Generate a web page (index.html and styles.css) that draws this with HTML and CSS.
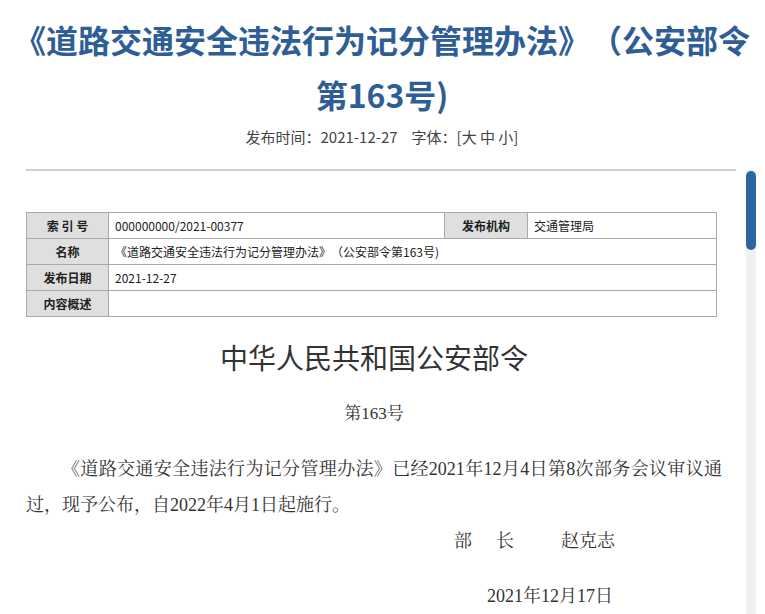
FILE: index.html
```html
<!DOCTYPE html>
<html lang="zh-CN">
<head>
<meta charset="utf-8">
<title>道路交通安全违法行为记分管理办法</title>
<link rel="stylesheet" href="styles.css">
</head>
<body>
<div class="page">
  <header class="head">
    <h1 class="title">《道路交通安全违法行为记分管理办法》（公安部令第163号)</h1>
    <div class="meta">发布时间：2021-12-27<span class="gap"></span>字体：[大 中 小]</div>
  </header>
  <div class="rule"></div>
  <div class="article">
    <table class="info">
      <colgroup>
        <col class="c1"><col class="c2"><col class="c3"><col class="c4">
      </colgroup>
      <tr>
        <th>索 引 号</th>
        <td>000000000/2021-00377</td>
        <th>发布机构</th>
        <td>交通管理局</td>
      </tr>
      <tr>
        <th>名称</th>
        <td colspan="3">《道路交通安全违法行为记分管理办法》（公安部令第163号)</td>
      </tr>
      <tr>
        <th>发布日期</th>
        <td colspan="3">2021-12-27</td>
      </tr>
      <tr>
        <th>内容概述</th>
        <td colspan="3"></td>
      </tr>
    </table>
    <h2 class="order">中华人民共和国公安部令</h2>
    <p class="num">第163号</p>
    <p class="para">《道路交通安全违法行为记分管理办法》已经2021年12月4日第8次部务会议审议通过，现予公布，自2022年4月1日起施行。</p>
    <p class="sign"><span>部</span><span class="s1">长</span><span class="s2">赵克志</span></p>
    <p class="date">2021年12月17日</p>
  </div>
  <div class="scroll-track"><div class="scroll-thumb"></div></div>
</div>
</body>
</html>
```

FILE: styles.css
```css
html, body {
  margin: 0;
  padding: 0;
  background: #ffffff;
}

.page {
  position: relative;
  width: 765px;
  height: 614px;
  overflow: hidden;
  font-family: "Noto Sans CJK SC", sans-serif;
  text-spacing-trim: space-all;
}

.head {
  width: 764px;
  text-align: center;
  padding-top: 12px;
}

.title {
  margin: 0;
  font-size: 32px;
  line-height: 55px;
  font-weight: 700;
  color: #2e5e95;
  font-family: "Noto Sans CJK SC", sans-serif;
}

.meta {
  margin-top: 5px;
  font-size: 15px;
  line-height: 20px;
  color: #444444;
  padding-left: 0;
}

.gap {
  display: inline-block;
  width: 14px;
}

.rule {
  margin: 22px 0 0 26px;
  width: 710px;
  height: 2px;
  background: #d0d0d0;
}

.article {
  width: 696px;
  margin: 41px 0 0 26px;
  color: #333333;
}

.info {
  width: 690px;
  border-collapse: collapse;
  table-layout: fixed;
  font-size: 12px;
}

.info .c1 { width: 82px; }
.info .c2 { width: 336px; }
.info .c3 { width: 83px; }
.info .c4 { width: 189px; }

.info th,
.info td {
  border: 1px solid #a9a9a9;
  height: 25px;
  padding: 0 6px;
  line-height: 25px;
  white-space: nowrap;
  overflow: hidden;
}

.info th {
  background: #dfdfdf;
  font-weight: 700;
  text-align: center;
  color: #222222;
}

.info td {
  text-align: left;
  color: #222222;
  font-family: "Noto Sans CJK SC", sans-serif;
}

.order {
  margin: 20px 0 0 0;
  text-align: center;
  font-size: 28px;
  line-height: 40px;
  font-weight: 400;
  color: #333333;
}

.num,
.para,
.sign,
.date {
  font-family: "Liberation Serif", "Noto Serif CJK SC", "Noto Sans CJK SC", serif;
  font-size: 18px;
  line-height: 36px;
  color: #333333;
  margin: 0;
}

.num {
  margin-top: 19px;
  text-align: center;
  font-size: 17px;
}

.para {
  margin-top: 19px;
  text-indent: 2em;
  text-align: justify;
}

.sign {
  text-align: right;
  padding-right: 107px;
}

.sign .s1 { margin-left: 24px; }
.sign .s2 { margin-left: 47px; }

.date {
  margin-top: 19px;
  text-align: right;
  padding-right: 109px;
}

.scroll-track {
  position: absolute;
  left: 746px;
  top: 170px;
  width: 10px;
  bottom: 0;
  background: #f0f0f0;
}

.scroll-thumb {
  margin-top: 1px;
  width: 10px;
  height: 79px;
  border-radius: 5px;
  background: #2b66a3;
}
```
